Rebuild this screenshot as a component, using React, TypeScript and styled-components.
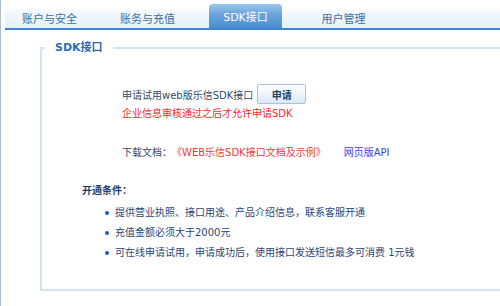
import styled, { createGlobalStyle } from 'styled-components';

const GlobalStyle = createGlobalStyle`
  html, body {
    margin: 0;
    padding: 0;
    background: #fff;
    overflow: hidden;
  }
  body {
    font-family: "DejaVu Sans", "Noto Sans CJK SC", sans-serif;
  }
`;

const Page = styled.div`
  width: 500px;
  height: 306px;
  box-sizing: border-box;
  border-left: 1px solid #aabfd4;
  overflow: hidden;
`;

const TabBar = styled.div`
  display: flex;
  align-items: stretch;
  height: 24px;
  margin: 4px 0 0 4px;
  padding-left: 8px;
  border-bottom: 2px solid #3d86d3;
  background: linear-gradient(to bottom, #fff 0, #fff 5px, #f6fafd 6px, #e4f0fa 100%);
`;

const Tab = styled.div<{ $active?: boolean }>`
  width: 73px;
  margin-right: 25px;
  display: flex;
  align-items: center;
  justify-content: center;
  box-sizing: border-box;
  padding-top: ${p => (p.$active ? '0' : '4px')};
  font-size: 11px;
  color: ${p => (p.$active ? '#fff' : '#3b6fa9')};
  border-radius: 4px 4px 0 0;
  background: ${p => (p.$active ? 'linear-gradient(to bottom, #9cc6ec 0%, #6ea6dd 40%, #4a8dd2 100%)' : 'transparent')};
`;

const Frame = styled.fieldset`
  margin: 10px -30px 0 39px;
  padding: 0 0 26px 0;
  border: 2px solid #d2e3f4;
  min-inline-size: 0;
`;

const Legend = styled.legend`
  margin-left: 3px;
  padding: 0 10px;
  line-height: 16px;
  font-size: 11px;
  font-weight: bold;
  color: #2a6cb4;
`;

const Section = styled.div<{ $indent: number; $top: number }>`
  padding-left: ${p => p.$indent}px;
  margin-top: ${p => p.$top}px;
  font-size: 10px;
`;

const Row = styled.div`
  display: flex;
  align-items: center;
  height: 20px;
  color: #33496b;
`;

const ApplyButton = styled.button`
  margin-left: 4px;
  width: 49px;
  height: 20px;
  padding: 0;
  border: 1px solid #a7c3e1;
  border-radius: 2px;
  background: linear-gradient(to bottom, #ffffff 0%, #eef5fc 50%, #d9e8f6 100%);
  font-family: "DejaVu Sans", "Noto Sans CJK SC", sans-serif;
  font-size: 10px;
  font-weight: bold;
  color: #243f66;
`;

const Warn = styled.div`
  line-height: 19px;
  color: #ff2424;
`;

const Line = styled.div`
  display: flex;
  align-items: center;
  line-height: 19px;
  color: #33496b;
`;

const Link = styled.a<{ $tone: 'red' | 'blue' }>`
  color: ${p => (p.$tone === 'red' ? '#f23838' : '#3b3bf2')};
  text-decoration: none;
  margin-left: ${p => (p.$tone === 'blue' ? '18px' : '0')};
`;

const Heading = styled.div`
  line-height: 19px;
  font-weight: bold;
  color: #1d3f72;
`;

const List = styled.ul`
  margin: 3px 0 0 0;
  padding: 0;
  list-style: none;
`;

const Item = styled.li`
  display: flex;
  align-items: center;
  line-height: 20px;
  padding-left: 63px;
  color: #2a4677;
  &::before {
    content: '';
    width: 4px;
    height: 4px;
    border-radius: 50%;
    background: #1d5bb3;
    margin-right: 6px;
    flex: none;
  }
`;

const tabs = ['账户与安全', '账务与充值', 'SDK接口', '用户管理'];

const conditions = [
  '提供营业执照、接口用途、产品介绍信息，联系客服开通',
  '充值金额必须大于2000元',
  '可在线申请试用，申请成功后，使用接口发送短信最多可消费 1元钱',
];

export default function App() {
  return (
    <Page>
      <GlobalStyle />
      <TabBar>
        {tabs.map(t => (
          <Tab key={t} $active={t === 'SDK接口'}>{t}</Tab>
        ))}
      </TabBar>

      <Frame>
        <Legend>SDK接口</Legend>

        <Section $indent={80} $top={28}>
          <Row>
            申请试用web版乐信SDK接口
            <ApplyButton>申请</ApplyButton>
          </Row>
          <Warn>企业信息审核通过之后才允许申请SDK</Warn>
        </Section>

        <Section $indent={80} $top={20}>
          <Line>
            下载文档：
            <Link $tone="red" href="#">《WEB乐信SDK接口文档及示例》</Link>
            <Link $tone="blue" href="#">网页版API</Link>
          </Line>
        </Section>

        <Section $indent={40} $top={19}>
          <Heading>开通条件：</Heading>
        </Section>

        <Section $indent={0} $top={0}>
          <List>
            {conditions.map(c => (
              <Item key={c}>{c}</Item>
            ))}
          </List>
        </Section>
      </Frame>
    </Page>
  );
}
